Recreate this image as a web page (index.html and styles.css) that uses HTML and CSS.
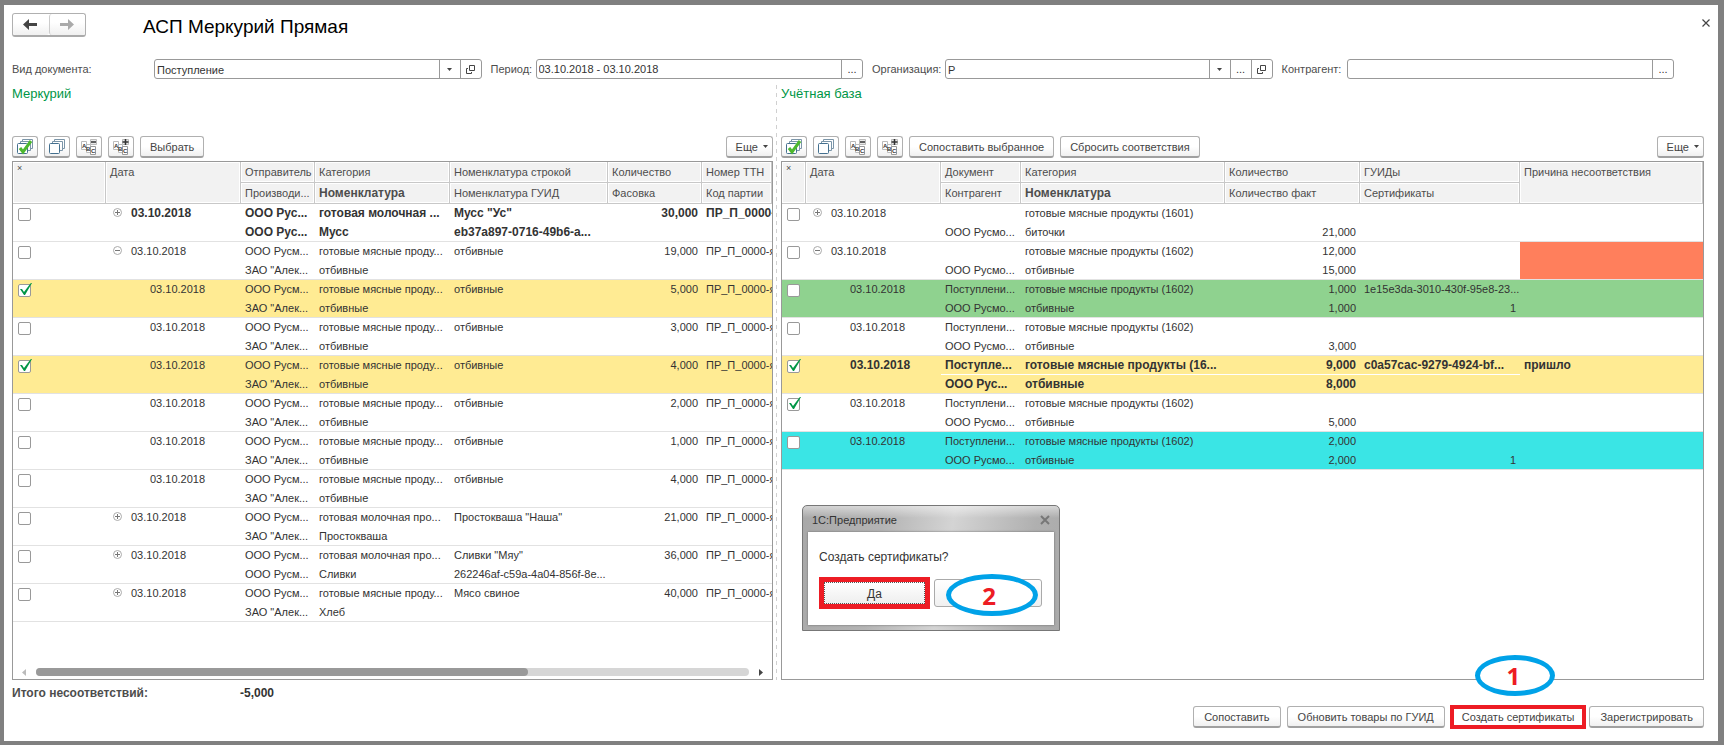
FILE: index.html
```
<!DOCTYPE html>
<html lang="ru">
<head>
	<meta charset="utf-8">
	<title>АСП Меркурий Прямая</title>
	<link rel="stylesheet" href="styles.css">
</head>
<body>

	<!-- shared icons -->
	<svg class="sprite" aria-hidden="true">
		<symbol id="i-stack" viewBox="0 0 16 16">
			<path d="M5.500 3V.5h10v9H13M3.500 5V2.500h10v9H11" fill="none" stroke="#7b95a8"/>
			<rect x=".5" y="4.500" width="10" height="10" rx="1" fill="#fff" stroke="#44708f"/>
		</symbol>
		<symbol id="i-abc" viewBox="0 0 16 16">
			<path d="M.5 2.500h5v8h-5z" fill="#fff" stroke="#bbb"/>
			<path d="M5.500 5.500h4v8h-4z" fill="#fff" stroke="#bbb"/>
			<path d="M9.500 7.500h5v8h-5z" fill="#fff" stroke="#999"/>
			<text class="glyph" x="1" y="9">A</text>
			<text class="glyph" x="5" y="12">B</text>
			<text class="glyph" x="10" y="14">C</text>
		</symbol>
		<symbol id="i-plus" viewBox="0 0 9 9">
			<circle cx="4.500" cy="4.500" r="4" fill="#fff" stroke="#aaa"/>
			<path d="M2 4.500h5M4.500 2v5" stroke="#777"/>
		</symbol>
		<symbol id="i-minus" viewBox="0 0 9 9">
			<circle cx="4.500" cy="4.500" r="4" fill="#fff" stroke="#aaa"/>
			<path d="M2 4.500h5" stroke="#777"/>
		</symbol>
		<symbol id="i-open" viewBox="0 0 9 9">
			<path d="M3.500.5h5v5h-5zM2 3.500H.5v5h5V7" fill="none" stroke="#444"/>
		</symbol>
		<symbol id="i-down" viewBox="0 0 5 3"><path d="M0 0h5L2.500 3z" fill="#444"/></symbol>
	</svg>

	<div class="window">
		<header class="title-bar">
			<div class="nav">
				<button type="button" aria-label="Назад"><svg width="15" height="11" viewBox="0 0 15 11"><path d="M0 5.500L6 0v4h8v3H6v4z" fill="#444"/></svg></button>
				<button type="button" aria-label="Вперед"><svg width="15" height="11" viewBox="0 0 15 11"><path d="M14 5.500L8 0v4H0v3h8v4z" fill="#aaa"/></svg></button>
			</div>
			<h1>АСП Меркурий Прямая</h1>
			<button type="button" class="close" aria-label="Закрыть"><svg width="8" height="8" viewBox="0 0 8 8"><path d="M.5.5l7 7M7.500.5l-7 7" stroke="#444" stroke-width="1.200"/></svg></button>
		</header>

		<form class="filters">
			<label class="label-kind" for="kind">Вид документа:</label>
			<div class="field">
				<select id="kind"><option>Поступление</option></select>
				<button type="button" aria-label="Открыть"><svg width="9" height="9"><use href="#i-open"/></svg></button>
			</div>
			<label class="label-period" for="period">Период:</label>
			<div class="field">
				<input type="text" id="period" value="03.10.2018 - 03.10.2018">
				<button type="button">...</button>
			</div>
			<label class="label-org" for="org">Организация:</label>
			<div class="field">
				<select id="org"><option>Р</option></select>
				<button type="button">...</button>
				<button type="button" aria-label="Открыть"><svg width="9" height="9"><use href="#i-open"/></svg></button>
			</div>
			<label class="label-partner" for="partner">Контрагент:</label>
			<div class="field">
				<input type="text" id="partner">
				<button type="button">...</button>
			</div>
		</form>

		<main class="panes">
			<section class="pane pane-left">
				<h2>Меркурий</h2>
				<div class="toolbar">
					<button type="button" class="btn icon" aria-label="Отметить все"><svg width="16" height="16"><use href="#i-stack"/><path d="M3 9l3 4 8-11" fill="none" stroke="#4db82e" stroke-width="3"/></svg></button>
					<button type="button" class="btn icon" aria-label="Снять отметки"><svg width="16" height="16"><use href="#i-stack"/></svg></button>
					<button type="button" class="btn icon" aria-label="Свернуть"><svg width="16" height="16"><use href="#i-abc"/><path d="M9.500.5h6v5h-6z" fill="#e8e8e8" stroke="#bbb"/><path d="M10 3h5" stroke="#333" stroke-width="1.500"/></svg></button>
					<button type="button" class="btn icon" aria-label="Развернуть"><svg width="16" height="16"><use href="#i-abc"/><path d="M9.500.5h6v5h-6z" fill="#e8e8e8" stroke="#bbb"/><path d="M9.500 3h6M12.500 0v6" stroke="#333" stroke-width="1.500"/></svg></button>
					<button type="button" class="btn">Выбрать</button>
					<button type="button" class="btn more">Еще <svg width="5" height="3"><use href="#i-down"/></svg></button>
				</div>
				<div class="grid">
					<table>
						<colgroup><col class="w93"><col class="w135"><col class="w74"><col class="w135"><col class="w158"><col class="w94"><col></colgroup>
						<thead>
							<tr><th rowspan="2" class="star">×</th><th rowspan="2">Дата</th><th>Отправитель</th><th>Категория</th><th>Номенклатура строкой</th><th>Количество</th><th>Номер ТТН</th></tr>
							<tr><th>Производи...</th><th class="strong">Номенклатура</th><th>Номенклатура ГУИД</th><th>Фасовка</th><th>Код партии</th></tr>
						</thead>
						<tbody>
							<tr class="bold"><td><input type="checkbox" aria-label="Строка 1"></td><td class="date"><svg width="9" height="9"><use href="#i-plus"/></svg>03.10.2018</td><td>ООО Рус...<br>ООО Рус...</td><td>готовая молочная ...<br>Мусс</td><td>Мусс "Ус"<br>eb37a897-0716-49b6-а...</td><td class="num">30,000</td><td>ПР_П_0000-я</td></tr>
							<tr><td><input type="checkbox" aria-label="Строка 2"></td><td class="date"><svg width="9" height="9"><use href="#i-minus"/></svg>03.10.2018</td><td>ООО Русм...<br>ЗАО "Алек...</td><td>готовые мясные проду...<br>отбивные</td><td>отбивные</td><td class="num">19,000</td><td>ПР_П_0000-я</td></tr>
							<tr class="yellow"><td><input type="checkbox" aria-label="Строка 3" checked></td><td class="date child">03.10.2018</td><td>ООО Русм...<br>ЗАО "Алек...</td><td>готовые мясные проду...<br>отбивные</td><td>отбивные</td><td class="num">5,000</td><td>ПР_П_0000-я</td></tr>
							<tr><td><input type="checkbox" aria-label="Строка 4"></td><td class="date child">03.10.2018</td><td>ООО Русм...<br>ЗАО "Алек...</td><td>готовые мясные проду...<br>отбивные</td><td>отбивные</td><td class="num">3,000</td><td>ПР_П_0000-я</td></tr>
							<tr class="yellow"><td><input type="checkbox" aria-label="Строка 5" checked></td><td class="date child">03.10.2018</td><td>ООО Русм...<br>ЗАО "Алек...</td><td>готовые мясные проду...<br>отбивные</td><td>отбивные</td><td class="num">4,000</td><td>ПР_П_0000-я</td></tr>
							<tr><td><input type="checkbox" aria-label="Строка 6"></td><td class="date child">03.10.2018</td><td>ООО Русм...<br>ЗАО "Алек...</td><td>готовые мясные проду...<br>отбивные</td><td>отбивные</td><td class="num">2,000</td><td>ПР_П_0000-я</td></tr>
							<tr><td><input type="checkbox" aria-label="Строка 7"></td><td class="date child">03.10.2018</td><td>ООО Русм...<br>ЗАО "Алек...</td><td>готовые мясные проду...<br>отбивные</td><td>отбивные</td><td class="num">1,000</td><td>ПР_П_0000-я</td></tr>
							<tr><td><input type="checkbox" aria-label="Строка 8"></td><td class="date child">03.10.2018</td><td>ООО Русм...<br>ЗАО "Алек...</td><td>готовые мясные проду...<br>отбивные</td><td>отбивные</td><td class="num">4,000</td><td>ПР_П_0000-я</td></tr>
							<tr><td><input type="checkbox" aria-label="Строка 9"></td><td class="date"><svg width="9" height="9"><use href="#i-plus"/></svg>03.10.2018</td><td>ООО Русм...<br>ЗАО "Алек...</td><td>готовая молочная про...<br>Простокваша</td><td>Простокваша "Наша"</td><td class="num">21,000</td><td>ПР_П_0000-я</td></tr>
							<tr><td><input type="checkbox" aria-label="Строка 10"></td><td class="date"><svg width="9" height="9"><use href="#i-plus"/></svg>03.10.2018</td><td>ООО Русм...<br>ООО Русм...</td><td>готовая молочная про...<br>Сливки</td><td>Сливки "Мяу"<br>262246af-c59a-4a04-856f-8e...</td><td class="num">36,000</td><td>ПР_П_0000-я</td></tr>
							<tr><td><input type="checkbox" aria-label="Строка 11"></td><td class="date"><svg width="9" height="9"><use href="#i-plus"/></svg>03.10.2018</td><td>ООО Русм...<br>ЗАО "Алек...</td><td>готовые мясные проду...<br>Хлеб</td><td>Мясо свиное</td><td class="num">40,000</td><td>ПР_П_0000-я</td></tr>
						</tbody>
					</table>
					<div class="scrollbar">
						<svg width="4" height="7" viewBox="0 0 4 7"><path d="M4 0v7L0 3.500z" fill="#bbb"/></svg>
						<div class="track"><div class="thumb"></div></div>
						<svg width="4" height="7" viewBox="0 0 4 7"><path d="M0 0v7l4-3.500z" fill="#444"/></svg>
					</div>
				</div>
			</section>

			<div class="splitter"></div>

			<section class="pane pane-right">
				<h2>Учётная база</h2>
				<div class="toolbar">
					<button type="button" class="btn icon" aria-label="Отметить все"><svg width="16" height="16"><use href="#i-stack"/><path d="M3 9l3 4 8-11" fill="none" stroke="#4db82e" stroke-width="3"/></svg></button>
					<button type="button" class="btn icon" aria-label="Снять отметки"><svg width="16" height="16"><use href="#i-stack"/></svg></button>
					<button type="button" class="btn icon" aria-label="Свернуть"><svg width="16" height="16"><use href="#i-abc"/><path d="M9.500.5h6v5h-6z" fill="#e8e8e8" stroke="#bbb"/><path d="M10 3h5" stroke="#333" stroke-width="1.500"/></svg></button>
					<button type="button" class="btn icon" aria-label="Развернуть"><svg width="16" height="16"><use href="#i-abc"/><path d="M9.500.5h6v5h-6z" fill="#e8e8e8" stroke="#bbb"/><path d="M9.500 3h6M12.500 0v6" stroke="#333" stroke-width="1.500"/></svg></button>
					<button type="button" class="btn">Сопоставить выбранное</button>
					<button type="button" class="btn">Сбросить соответствия</button>
					<button type="button" class="btn more">Еще <svg width="5" height="3"><use href="#i-down"/></svg></button>
				</div>
				<div class="grid">
					<table>
						<colgroup><col class="w24"><col class="w135"><col class="w80"><col class="w204"><col class="w135"><col class="w160"><col></colgroup>
						<thead>
							<tr><th rowspan="2" class="star">×</th><th rowspan="2">Дата</th><th>Документ</th><th>Категория</th><th>Количество</th><th>ГУИДы</th><th rowspan="2">Причина несоответствия</th></tr>
							<tr><th>Контрагент</th><th class="strong">Номенклатура</th><th>Количество факт</th><th>Сертификаты</th></tr>
						</thead>
						<tbody>
							<tr><td><input type="checkbox" aria-label="Документ 1"></td><td class="date"><svg width="9" height="9"><use href="#i-plus"/></svg>03.10.2018</td><td><br>ООО Русмо...</td><td>готовые мясные продукты (1601)<br>биточки</td><td class="num"><br>21,000</td><td></td><td></td></tr>
							<tr><td><input type="checkbox" aria-label="Документ 2"></td><td class="date"><svg width="9" height="9"><use href="#i-minus"/></svg>03.10.2018</td><td><br>ООО Русмо...</td><td>готовые мясные продукты (1602)<br>отбивные</td><td class="num">12,000<br>15,000</td><td></td><td class="red"></td></tr>
							<tr class="green"><td><input type="checkbox" aria-label="Документ 3"></td><td class="date child">03.10.2018</td><td>Поступлени...<br>ООО Русмо...</td><td>готовые мясные продукты (1602)<br>отбивные</td><td class="num">1,000<br>1,000</td><td>1e15e3da-3010-430f-95e8-23...<div class="num">1</div></td><td></td></tr>
							<tr><td><input type="checkbox" aria-label="Документ 4"></td><td class="date child">03.10.2018</td><td>Поступлени...<br>ООО Русмо...</td><td>готовые мясные продукты (1602)<br>отбивные</td><td class="num"><br>3,000</td><td></td><td></td></tr>
							<tr class="yellow bold"><td><input type="checkbox" aria-label="Документ 5" checked></td><td class="date child">03.10.2018</td><td class="split">Поступле...<br>ООО Рус...</td><td class="split">готовые мясные продукты (16...<br>отбивные</td><td class="num split">9,000<br>8,000</td><td class="split">c0a57cac-9279-4924-bf...</td><td>пришло</td></tr>
							<tr><td><input type="checkbox" aria-label="Документ 6" checked></td><td class="date child">03.10.2018</td><td>Поступлени...<br>ООО Русмо...</td><td>готовые мясные продукты (1602)<br>отбивные</td><td class="num"><br>5,000</td><td></td><td></td></tr>
							<tr class="cyan"><td><input type="checkbox" aria-label="Документ 7"></td><td class="date child">03.10.2018</td><td>Поступлени...<br>ООО Русмо...</td><td>готовые мясные продукты (1602)<br>отбивные</td><td class="num">2,000<br>2,000</td><td><br><div class="num">1</div></td><td></td></tr>
						</tbody>
					</table>
				</div>

				<div class="dialog" role="dialog" aria-labelledby="dialog-title">
					<div class="dialog-head">
						<span id="dialog-title">1С:Предприятие</span>
						<button type="button" class="close" aria-label="Закрыть"><svg width="10" height="10" viewBox="0 0 10 10"><path d="M1 1l8 8M9 1L1 9" stroke="#777" stroke-width="2"/></svg></button>
					</div>
					<div class="dialog-body">
						<p>Создать сертификаты?</p>
						<div class="dialog-buttons">
							<button type="button" class="yes">Да</button>
							<div class="marked">
								<button type="button" class="no" aria-label="Нет"></button>
								<span class="ring ring-two">2</span>
							</div>
						</div>
					</div>
				</div>
			</section>
		</main>

		<div class="totals"><span class="totals-label">Итого несоответствий:</span><span class="totals-value">-5,000</span></div>

		<footer class="actions">
			<button type="button" class="btn">Сопоставить</button>
			<button type="button" class="btn">Обновить товары по ГУИД</button>
			<div class="marked">
				<button type="button" class="btn framed">Создать сертификаты</button>
				<span class="ring ring-one">1</span>
			</div>
			<button type="button" class="btn">Зарегистрировать</button>
		</footer>
	</div>

</body>
</html>
```
FILE: styles.css
```
* {
	box-sizing: border-box;
}

body {
	margin: 0;
	color: #333;
	font-family: "Liberation Sans", Arial, sans-serif;
	font-size: 11px;
	line-height: 19px;
}

button,
input,
select {
	color: inherit;
	font: inherit;
	margin: 0;
}

button {
	cursor: pointer;
}

svg {
	display: block;
	flex: none;
}

.sprite {
	height: 0;
	position: absolute;
	width: 0;
}

.glyph {
	fill: #333;
	font-size: 6px;
	font-weight: bold;
}

.window {
	background: #fff;
	border: solid #808080;
	border-width: 5px 6px 4px 4px;
	display: flex;
	flex-direction: column;
	min-height: 100vh;
	padding: 8px 14px 13px 8px;
}

/* title */
.title-bar {
	display: flex;
	height: 24px;
}

.nav {
	border: 1px solid #b0b0b0;
	border-bottom: 2px solid #aaa;
	border-radius: 3px;
	display: flex;
	width: 74px;
}

.nav button {
	align-items: center;
	background: linear-gradient(#fff 40%, #f0f0f0);
	border: 0;
	border-radius: 3px;
	display: flex;
	flex: 1;
	justify-content: center;
	padding: 0;
}

.nav button + button {
	border-left: 1px solid #ccc;
}

h1 {
	color: #000;
	font-size: 19px;
	font-weight: normal;
	line-height: 28px;
	margin: 0 auto 0 57px;
}

.close {
	background: none;
	border: 0;
	padding: 0;
}

.title-bar .close {
	align-self: flex-start;
	margin: 6px -6px 0 0;
}

/* filters */
.filters {
	color: #4d4d4d;
	display: flex;
	line-height: 20px;
	margin: 22px 30px 6px 0;
}

.label-kind {
	width: 142px;
}

.label-period {
	width: 45px;
}

.label-org {
	width: 73px;
}

.label-partner {
	width: 65px;
}

.field {
	border: 1px solid #999;
	border-radius: 3px;
	color: #333;
	display: flex;
	flex: 1;
	height: 20px;
	margin-right: 9px;
	min-width: 0;
}

.field:last-child {
	margin-right: 0;
}

.field input,
.field select {
	appearance: none;
	background: none;
	border: 0;
	flex: 1;
	min-width: 0;
	padding: 0 2px;
}

.field select {
	background: url("data:image/svg+xml,%3Csvg xmlns='http://www.w3.org/2000/svg' width='21' height='18'%3E%3Cpath d='M.5 0v18' stroke='%23999'/%3E%3Cpath d='M8 8h5l-2.500 3z' fill='%23444'/%3E%3C/svg%3E") right no-repeat;
}

.field button {
	align-items: center;
	background: none;
	border: 0;
	border-left: 1px solid #999;
	display: flex;
	justify-content: center;
	padding: 0;
	width: 21px;
}

/* panes */
.panes {
	display: flex;
	flex: 1;
}

.pane {
	display: flex;
	flex-direction: column;
	min-width: 0;
	position: relative;
}

.pane-left {
	flex: 761 1 0;
}

.pane-right {
	flex: 923 1 0;
}

.splitter {
	background: repeating-linear-gradient(#d0d0d0 0 4px, #fff 4px 8px) 3px 0 / 1px 100% no-repeat;
	width: 8px;
}

h2 {
	color: #009646;
	font-size: 13px;
	font-weight: normal;
	line-height: 18px;
	margin: 0 0 33px;
}

.toolbar {
	display: flex;
	gap: 6px;
	margin-bottom: 3px;
}

.btn {
	align-items: center;
	background: linear-gradient(#fff 50%, #f0f0f0);
	border: 1px solid #b0b0b0;
	border-bottom: 2px solid #a0a0a0;
	border-radius: 3px;
	color: #444;
	display: flex;
	height: 22px;
	justify-content: center;
	line-height: 16px;
	padding: 0 9px;
	white-space: nowrap;
}

.icon {
	padding: 0;
	width: 26px;
}

.more {
	gap: 5px;
	margin-left: auto;
	padding: 0 4px 0 9px;
}

/* tables */
.grid {
	border: 1px solid #999;
	display: flex;
	flex: 1;
	flex-direction: column;
	overflow: hidden;
}

table {
	border-spacing: 0;
	table-layout: fixed;
	width: 100%;
}

.w24 {
	width: 24px;
}

.w74 {
	width: 74px;
}

.w80 {
	width: 80px;
}

.w93 {
	width: 93px;
}

.w94 {
	width: 94px;
}

.w135 {
	width: 135px;
}

.w158 {
	width: 158px;
}

.w160 {
	width: 160px;
}

.w204 {
	width: 204px;
}

th {
	background: #f2f2f2;
	border: solid #c8c8c8;
	border-width: 0 1px 1px 0;
	box-shadow: inset 0 0 0 1px #fff;
	color: #4d4d4d;
	font-weight: normal;
	height: 21px;
	line-height: 20px;
	overflow: hidden;
	padding: 0 0 0 4px;
	text-align: left;
	vertical-align: top;
	white-space: nowrap;
}

th:last-child {
	border-right-width: 1px;
}

.star {
	font-size: 9px;
	line-height: 13px;
}

.strong,
.bold {
	font-size: 12px;
	font-weight: bold;
}

td {
	box-shadow: inset 0 -1px #e2e2e2;
	height: 38px;
	overflow: hidden;
	padding: 0 4px;
	vertical-align: top;
	white-space: nowrap;
}

td:first-child {
	padding: 4px 5px;
}

td .num,
.num {
	text-align: right;
}

.date svg {
	display: inline-block;
	margin: 0 9px 0 3px;
}

.child {
	padding-left: 44px;
}

.yellow {
	background: #ffeb93;
}

.green {
	background: #8fd28f;
}

.cyan {
	background: #3ae5e5;
}

.red {
	background: #ff7f5c;
}

.split {
	background: linear-gradient(#fff, #fff) 0 18px / 100% 1px no-repeat;
}

input[type="checkbox"] {
	appearance: none;
	background: #fff;
	border: 1px solid #999;
	border-radius: 2px;
	display: block;
	height: 13px;
	position: relative;
	width: 13px;
}

input[type="checkbox"]:checked::after {
	background: url("data:image/svg+xml,%3Csvg xmlns='http://www.w3.org/2000/svg' width='14' height='13'%3E%3Cpath d='M2 6l2 0 2 3 6-8 1-1h1L7 12H6z' fill='%23009646'/%3E%3C/svg%3E");
	content: "";
	height: 13px;
	left: -1px;
	position: absolute;
	top: -2px;
	width: 14px;
}

.scrollbar {
	align-items: center;
	display: flex;
	gap: 10px;
	margin-top: auto;
	padding: 0 9px 3px;
}

.track {
	background: #d6d6d6;
	border-radius: 4px;
	flex: 1;
	height: 8px;
}

.thumb {
	background: #999;
	border-radius: 4px;
	height: 8px;
	width: 69%;
}

/* confirmation window */
.dialog {
	background: linear-gradient(rgba(255, 255, 255, 0.5), transparent 12px), linear-gradient(100deg, #a8a8a8, #b4b4b4 30%, #d4d4d4 55%, #b0b0b0 85%, #aaa);
	border: 1px solid #777;
	border-radius: 5px 5px 0 0;
	left: 21px;
	padding: 0 5px 5px;
	position: absolute;
	top: 420px;
	width: 258px;
}

.dialog-head {
	align-items: center;
	display: flex;
	height: 26px;
	justify-content: space-between;
	padding: 2px 4px 0;
}

.dialog-body {
	background: #fff;
	box-shadow: 0 0 2px #666;
	height: 93px;
	padding: 16px 11px;
}

.dialog p {
	font-size: 12px;
	margin: 0;
}

.dialog-buttons {
	align-items: center;
	display: flex;
	gap: 4px;
	margin-top: 10px;
}

.yes {
	background: linear-gradient(#fff, #eee);
	border: 5px solid #ed1c24;
	font-size: 12px;
	height: 32px;
	line-height: 20px;
	outline: 1px dotted #555;
	outline-offset: -6px;
	padding: 2px 0 0;
	width: 111px;
}

.no {
	background: linear-gradient(#fff, #f0f0f0);
	border: 1px solid #aaa;
	border-radius: 3px;
	display: block;
	height: 28px;
	width: 108px;
}

/* numbered step markers */
.marked {
	position: relative;
}

.ring {
	align-items: center;
	background: #fff;
	border: 5px solid #00a2e8;
	border-radius: 50%;
	color: #ed1c24;
	display: flex;
	font-family: "Open Sans", sans-serif;
	font-size: 24px;
	font-weight: bold;
	justify-content: center;
	position: absolute;
}

.ring-one {
	bottom: 33px;
	height: 41px;
	left: 25px;
	padding-right: 3px;
	width: 80px;
}

.ring-two {
	height: 42px;
	left: 12px;
	padding-right: 6px;
	top: -5px;
	width: 92px;
}

/* bottom */
.totals {
	display: flex;
	font-size: 12px;
	font-weight: bold;
	line-height: 16px;
	padding: 5px 0 4px;
}

.totals-label {
	color: #4d4d4d;
	width: 228px;
}

.actions {
	align-items: center;
	display: flex;
	gap: 6px;
	height: 24px;
	justify-content: flex-end;
	margin-bottom: -1px;
}

.actions .btn {
	padding: 0 10px;
}

.actions .marked {
	margin: 0 -3px 0 -1px;
}

.actions .framed {
	background: #fff;
	border: 4px solid #ed1c24;
	border-radius: 0;
	height: 24px;
	padding: 0 8px;
}
```
